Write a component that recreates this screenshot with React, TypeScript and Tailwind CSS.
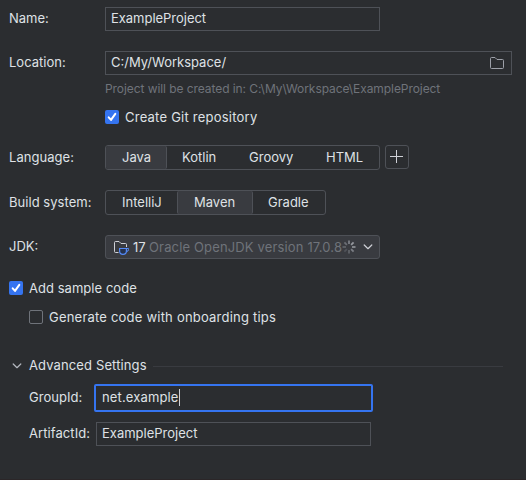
import type { ReactNode } from 'react';

function Txt({ children, className = '' }: { children: ReactNode; className?: string }) {
  return <span className={`whitespace-pre leading-4 ${className}`}>{children}</span>;
}

function Checkbox({ checked }: { checked?: boolean }) {
  return checked ? (
    <span className="flex size-3.5 shrink-0 items-center justify-center rounded-[2px] bg-[#3574f0]">
      <svg width="14" height="14" viewBox="0 0 14 14" fill="none" stroke="#fff" strokeWidth="2" strokeLinecap="round" strokeLinejoin="round">
        <path d="M3.7 7.3L6 9.9L10.3 3.9" />
      </svg>
    </span>
  ) : (
    <span className="size-3.5 shrink-0 rounded-[2px] border border-[#6f737a]" />
  );
}

function Chevron({ className }: { className: string }) {
  return (
    <svg className={`shrink-0 ${className}`} width="10" height="6" viewBox="0 0 10 6" fill="none" stroke="currentColor" strokeWidth="1.2" strokeLinecap="round" strokeLinejoin="round">
      <path d="M1.2 1L5 4.7L8.8 1" />
    </svg>
  );
}

function Spinner() {
  const rays = ['#7b7e85', '#95989e', '#8b8e94', '#7b7e85', '#5f6268', '#505359', '#5f6268', '#6b6e74'];
  return (
    <svg className="shrink-0" width="14" height="14" viewBox="-7 -7 14 14" strokeWidth="1.8">
      {rays.map((color, i) => (
        <line key={i} x1="0" y1="-3" x2="0" y2="-6.5" stroke={color} transform={`rotate(${i * 45})`} />
      ))}
    </svg>
  );
}

export default function App() {
  return (
    <div className="h-[480px] w-[526px] overflow-hidden border-b border-[#2b2628] bg-[#2b2d30] pt-[7px] pl-[9px] font-['Inter',sans-serif] text-[13px] text-[#dfe1e5]">
      <div className="flex h-6 items-center">
        <Txt className="mb-0.5 w-24">Name:</Txt>
        <div className="flex h-6 w-[275px] items-center border border-[#4e5157] pl-[5px]">
          <Txt className="mb-0.5 tracking-[-0.03px]">ExampleProject</Txt>
        </div>
      </div>

      <div className="mt-5 flex h-6 items-center">
        <Txt className="mb-0.5 w-24">Location:</Txt>
        <div className="flex h-6 w-[407px] items-center justify-between border border-[#4e5157] pr-[7px] pl-[5px]">
          <Txt className="mb-0.5">C:/My/Workspace/</Txt>
          <svg width="14" height="12" viewBox="0 0 14 12" fill="none" stroke="#9da0a8">
            <path d="M.5 10.5V1.5Q.5.5 1.5.5H5L7 2.5H12.5Q13.5 2.5 13.5 3.5V10.5Q13.5 11.5 12.5 11.5H1.5Q.5 11.5.5 10.5Z" />
          </svg>
        </div>
      </div>

      <div className="mt-1.5 ml-24 flex h-4 items-center text-xs text-[#6f737a]">
        <Txt className="tracking-[-0.07px]">Project will be created in: C:\My\Workspace\ExampleProject</Txt>
      </div>
      <div className="mt-[13px] ml-24 flex h-3.5 items-center gap-1.5">
        <Checkbox checked />
        <Txt className="tracking-[0.23px]">Create Git repository</Txt>
      </div>

      <div className="mt-[21px] flex h-[25px] items-center">
        <Txt className="mb-px w-24 tracking-[0.05px]">Language:</Txt>
        <div className="flex h-[25px] w-[275px] items-center rounded-[3px] border border-[#4e5157]">
          <span className="flex h-full w-[61px] items-center rounded-[2px] border-r border-[#4e5157] bg-[#393b40] pb-px pl-4"><Txt>Java</Txt></span>
          <span className="flex w-[67px] pb-px pl-[15px]"><Txt>Kotlin</Txt></span>
          <span className="flex w-[77px] pb-px pl-[15px]"><Txt>Groovy</Txt></span>
          <span className="flex pb-px pl-[15px]"><Txt>HTML</Txt></span>
        </div>
        <div className="mb-px ml-[5px] flex size-6 items-center justify-center rounded-[3px] border border-[#4e5157]">
          <svg width="14" height="14" viewBox="0 0 14 14" stroke="#ced0d6">
            <path d="M6.5 0V13M0 6.5H13" />
          </svg>
        </div>
      </div>

      <div className="mt-5 flex h-[25px] items-center">
        <Txt className="mb-px w-24 tracking-[0.04px]">Build system:</Txt>
        <div className="flex h-[25px] w-[221px] items-center rounded-[3px] border border-[#4e5157]">
          <span className="flex w-[71px] pb-px pl-4"><Txt>IntelliJ</Txt></span>
          <span className="flex h-full w-[76px] items-center rounded-[2px] border-x border-[#4e5157] bg-[#393b40] pb-px pl-4"><Txt>Maven</Txt></span>
          <span className="flex pb-px pl-[15px]"><Txt>Gradle</Txt></span>
        </div>
      </div>

      <div className="mt-5 flex h-6 items-center">
        <Txt className="mb-0.5 w-24">JDK:</Txt>
        <div className="flex h-6 w-[275px] items-center rounded-[3px] border border-[#4e5157] bg-[#393b40]">
          <svg className="mt-0.5 ml-2 shrink-0" width="15" height="14" viewBox="0 0 15 14" fill="none">
            <path d="M4.5 11.5H1.5Q.5 11.5.5 10.5V1.5Q.5.5 1.5.5H5L7 2.5H11.5Q12.5 2.5 12.5 3.5V6" stroke="#ced0d6" />
            <path d="M5.6 7.5H12.4V10Q12.4 13.4 9 13.4Q5.6 13.4 5.6 10Z" fill="#25324d" stroke="#548af7" strokeWidth="1.2" />
            <path d="M12.5 7.5H14.5V8.5Q14.5 10.5 12.5 10.5" stroke="#548af7" />
          </svg>
          <Txt className="ml-1 w-4">17</Txt>
          <Txt className="w-[193px] tracking-[0.15px] text-[#6f737a]">Oracle OpenJDK version 17.0.8</Txt>
          <Spinner />
          <Chevron className="ml-[7px] text-[#ced0d6]" />
        </div>
      </div>

      <div className="mt-[22px] flex h-3.5 items-center gap-1.5">
        <Checkbox checked />
        <Txt className="tracking-[0.04px]">Add sample code</Txt>
      </div>
      <div className="mt-[15px] ml-5 flex h-3.5 items-center gap-1.5">
        <Checkbox />
        <Txt className="tracking-[0.21px]">Generate code with onboarding tips</Txt>
      </div>

      <div className="mt-[34px] flex h-4 items-center">
        <Chevron className="mb-px ml-[3px] text-[#b4b8bf]" />
        <Txt className="mb-0.5 ml-[7px] w-[124px] tracking-[0.12px]">Advanced Settings</Txt>
        <div className="h-px w-[350px] bg-[#393b40]" />
      </div>

      <div className="mt-[10px] ml-5 flex h-7 items-center">
        <Txt className="mb-0.5 w-[65px] tracking-[0.05px]">GroupId:</Txt>
        <div className="flex h-7 w-[279px] items-center rounded-[2px] border-2 border-[#3574f0] pl-1.5">
          <Txt className="mb-0.5 w-[77px] tracking-[0.14px]">net.example</Txt>
          <span className="mb-px h-[17px] w-px bg-[#ced0d6]" />
        </div>
      </div>
      <div className="mt-[10px] ml-5 flex h-6 items-center">
        <Txt className="mb-0.5 w-[67px] tracking-[0.08px]">ArtifactId:</Txt>
        <div className="flex h-6 w-[275px] items-center border border-[#4e5157] pl-[5px]">
          <Txt className="mb-0.5">ExampleProject</Txt>
        </div>
      </div>
    </div>
  );
}
